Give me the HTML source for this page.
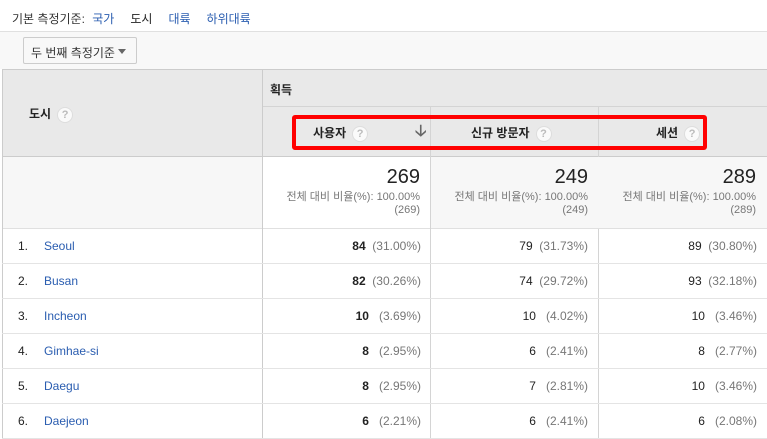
<!DOCTYPE html>
<html><head><meta charset="utf-8"><style>
*{margin:0;padding:0;box-sizing:border-box}
body{width:767px;height:439px;overflow:hidden;background:#fff;font-family:"Liberation Sans","Noto Sans CJK KR",sans-serif;font-size:12px;color:#222;position:relative}
.a{position:absolute;white-space:nowrap}
.q{display:inline-block;width:16px;height:16px;border-radius:50%;background:#fafafa;border:1px solid #ddd;color:#bbb;font-size:11px;line-height:14px;text-align:center;font-weight:bold;vertical-align:middle;margin-left:6px}
.hl{position:absolute;background:#ccc}
.row{position:absolute;left:2px;width:765px;height:35px;border-bottom:1px solid #e4e4e4}
.n{position:absolute;top:10px;font-size:12px}
.p{color:#777;font-size:12px}
</style></head><body>
<div class="a" style="left:12px;top:10px;color:#333">기본 측정기준: <span style="color:#2a5db0;margin-left:4px">국가</span><span style="margin-left:16px;color:#222">도시</span><span style="color:#2a5db0;margin-left:16px">대륙</span><span style="color:#2a5db0;margin-left:16px">하위대륙</span></div>
<div style="position:absolute;left:0;top:31px;width:767px;height:38px;background:#f8f8f8;border-top:1px solid #e0e0e0"></div>
<div class="a" style="left:23px;top:37px;width:114px;height:27px;border:1px solid #ccc;border-radius:2px;background:#f8f8f8;padding:6px 0 0 7px;color:#333">두 번째 측정기준<span style="position:absolute;right:10px;top:11px;border-left:4px solid transparent;border-right:4px solid transparent;border-top:5px solid #666"></span></div>
<div style="position:absolute;left:2px;top:69px;width:765px;height:88px;background:#e9e9e9;border-top:1px solid #ccc;border-bottom:1px solid #ccc"></div>
<div class="hl" style="left:2px;top:69px;width:1px;height:370px"></div>
<div class="hl" style="left:262px;top:69px;width:1px;height:370px"></div>
<div class="hl" style="left:430px;top:106px;width:1px;height:333px;background:#d4d4d4"></div>
<div class="hl" style="left:598px;top:106px;width:1px;height:333px;background:#d4d4d4"></div>
<div class="hl" style="left:263px;top:106px;width:504px;height:1px;background:#d4d4d4"></div>
<div class="a" style="left:29px;top:105px;font-weight:bold">도시<span class="q">?</span></div>
<div class="a" style="left:270px;top:81px;font-weight:bold">획득</div>
<div class="a" style="left:313px;top:124px;font-weight:bold">사용자<span class="q">?</span></div>
<div class="a" style="left:415px;top:120px;font-size:16px;color:#666;font-weight:bold">&#129123;</div>
<div class="a" style="left:471px;top:124px;font-weight:bold">신규 방문자<span class="q">?</span></div>
<div class="a" style="left:656px;top:124px;font-weight:bold">세션<span class="q">?</span></div>
<div style="position:absolute;left:292px;top:115px;width:415px;height:35px;border:4px solid #f00;border-radius:3px"></div>
<div style="position:absolute;left:3px;top:157px;width:259px;height:72px;background:#f7f7f7;border-bottom:1px solid #e0e0e0"></div>
<div style="position:absolute;left:263px;top:157px;width:167px;height:72px;background:#fff;border-bottom:1px solid #e0e0e0"></div>
<div style="position:absolute;left:431px;top:157px;width:336px;height:72px;background:#f7f7f7;border-bottom:1px solid #e0e0e0"></div>
<div class="a" style="right:347px;top:166px;font-size:20px;text-align:right">269</div>
<div class="a" style="right:347px;top:191px;font-size:11px;color:#777;text-align:right;line-height:13px">전체 대비 비율(%): 100.00%<br>(269)</div>
<div class="a" style="right:179px;top:166px;font-size:20px;text-align:right">249</div>
<div class="a" style="right:179px;top:191px;font-size:11px;color:#777;text-align:right;line-height:13px">전체 대비 비율(%): 100.00%<br>(249)</div>
<div class="a" style="right:11px;top:166px;font-size:20px;text-align:right">289</div>
<div class="a" style="right:11px;top:191px;font-size:11px;color:#777;text-align:right;line-height:13px">전체 대비 비율(%): 100.00%<br>(289)</div>
<div style="position:absolute;top:229px;left:0">
<div class="row" style="top:0"><span class="n" style="left:16px">1.</span><span class="n" style="left:42px;color:#2a5db0">Seoul</span><span class="n" style="right:346px"><b>84</b> <span class="p">&nbsp;(31.00%)</span></span><span class="n" style="right:179px">79 <span class="p">&nbsp;(31.73%)</span></span><span class="n" style="right:10px">89 <span class="p">&nbsp;(30.80%)</span></span></div>
<div class="row" style="top:35px"><span class="n" style="left:16px">2.</span><span class="n" style="left:42px;color:#2a5db0">Busan</span><span class="n" style="right:346px"><b>82</b> <span class="p">&nbsp;(30.26%)</span></span><span class="n" style="right:179px">74 <span class="p">&nbsp;(29.72%)</span></span><span class="n" style="right:10px">93 <span class="p">&nbsp;(32.18%)</span></span></div>
<div class="row" style="top:70px"><span class="n" style="left:16px">3.</span><span class="n" style="left:42px;color:#2a5db0">Incheon</span><span class="n" style="right:346px"><b>10</b> <span class="p">&nbsp;&nbsp;(3.69%)</span></span><span class="n" style="right:179px">10 <span class="p">&nbsp;&nbsp;(4.02%)</span></span><span class="n" style="right:10px">10 <span class="p">&nbsp;&nbsp;(3.46%)</span></span></div>
<div class="row" style="top:105px"><span class="n" style="left:16px">4.</span><span class="n" style="left:42px;color:#2a5db0">Gimhae-si</span><span class="n" style="right:346px"><b>8</b> <span class="p">&nbsp;&nbsp;(2.95%)</span></span><span class="n" style="right:179px">6 <span class="p">&nbsp;&nbsp;(2.41%)</span></span><span class="n" style="right:10px">8 <span class="p">&nbsp;&nbsp;(2.77%)</span></span></div>
<div class="row" style="top:140px"><span class="n" style="left:16px">5.</span><span class="n" style="left:42px;color:#2a5db0">Daegu</span><span class="n" style="right:346px"><b>8</b> <span class="p">&nbsp;&nbsp;(2.95%)</span></span><span class="n" style="right:179px">7 <span class="p">&nbsp;&nbsp;(2.81%)</span></span><span class="n" style="right:10px">10 <span class="p">&nbsp;&nbsp;(3.46%)</span></span></div>
<div class="row" style="top:175px"><span class="n" style="left:16px">6.</span><span class="n" style="left:42px;color:#2a5db0">Daejeon</span><span class="n" style="right:346px"><b>6</b> <span class="p">&nbsp;&nbsp;(2.21%)</span></span><span class="n" style="right:179px">6 <span class="p">&nbsp;&nbsp;(2.41%)</span></span><span class="n" style="right:10px">6 <span class="p">&nbsp;&nbsp;(2.08%)</span></span></div>
</div>
</body></html>
